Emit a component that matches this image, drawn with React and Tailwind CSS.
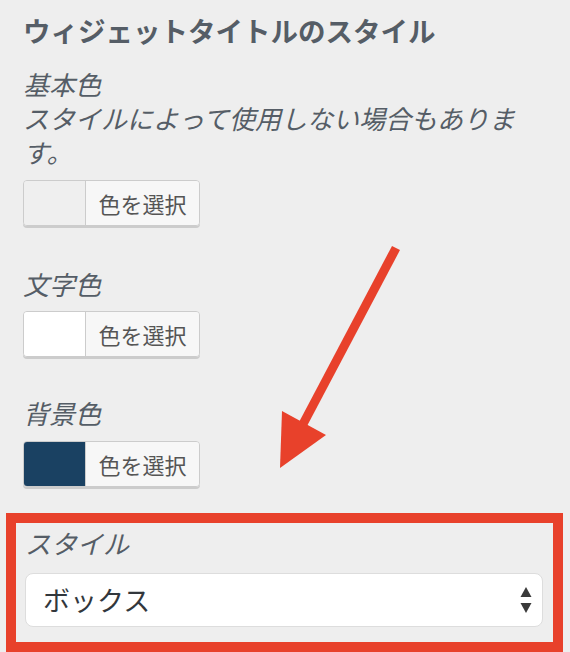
function ColorButton({ swatch }) {
  return (
    <div className="flex w-[177px] h-[46px] rounded-[4px] border border-[#cccccc] shadow-[0_2px_0_#cccccc] overflow-hidden">
      <div className={`w-[62px] h-full border-r border-[#cccccc] ${swatch}`}></div>
      <div className="flex-1 flex items-center justify-center bg-[#f7f7f7] text-[22px] text-[#555555]">
        色を選択
      </div>
    </div>
  );
}

function SelectArrows() {
  return (
    <svg width="12" height="26" viewBox="0 0 12 26" className="shrink-0">
      <path d="M6 0 L11.5 10 L0.5 10 Z" fill="#3a3a3a" />
      <path d="M6 26 L11.5 16 L0.5 16 Z" fill="#3a3a3a" />
    </svg>
  );
}

export default function App() {
  return (
    <div
      className="relative w-[570px] h-[652px] bg-[#eeeeee] overflow-hidden text-[#555d66]"
      style={{ fontFamily: '"Noto Sans CJK JP", "Noto Sans", sans-serif' }}
    >
      <div className="pl-[23px]">
        <h2 className="mt-[15px] text-[27.5px] leading-[30px] font-bold">
          ウィジェットタイトルのスタイル
        </h2>

        {/* label + description share one block so the lines space evenly */}
        <p className="mt-[22px] pr-[24px] text-[26px] leading-[34px] italic">
          <span>基本色</span>
          <br />
          スタイルによって使用しない場合もあります。
        </p>
        <div className="mt-[11px]">
          <ColorButton swatch="bg-[#efefef]" />
        </div>

        <div className="mt-[45px] text-[26px] leading-[26px] italic">文字色</div>
        <div className="mt-[14px]">
          <ColorButton swatch="bg-white" />
        </div>

        <div className="mt-[43px] text-[26px] leading-[26px] italic">背景色</div>
        <div className="mt-[15px]">
          <ColorButton swatch="bg-[#1a4162]" />
        </div>
      </div>

      <div className="mt-[26px] ml-[6px] w-[557px] border-[10px] border-[#e8412b] pt-[7px] pb-[15px] pl-[9px] pr-[10px]">
        <div className="text-[26px] leading-[26px] italic">スタイル</div>
        <div className="mt-[17px] h-[54px] flex items-center justify-between rounded-[8px] border border-[#dddddd] bg-white pl-[17px] pr-[10px] text-[27px] text-[#32373c]">
          <span>ボックス</span>
          <SelectArrows />
        </div>
      </div>

      <svg
        className="absolute inset-0 pointer-events-none"
        width="570"
        height="652"
        viewBox="0 0 570 652"
      >
        <line x1="396" y1="248" x2="302" y2="426" stroke="#e8412b" strokeWidth="9" />
        <path d="M282 411 L326 435 L280 468 Z" fill="#e8412b" />
      </svg>
    </div>
  );
}
